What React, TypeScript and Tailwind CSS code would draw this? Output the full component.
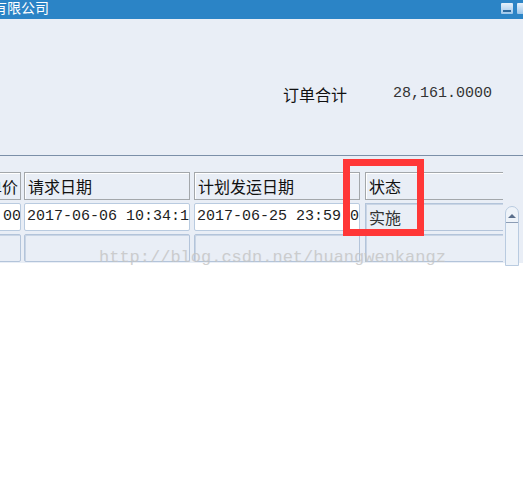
import React from "react";

const CJK = "font-['Noto_Sans_CJK_SC','Noto_Sans',sans-serif]";
const MONO = "font-['Liberation_Mono','Noto_Sans_CJK_SC',monospace]";

function HeaderCell({ label, className = "" }: { label: string; className?: string }) {
  return (
    <div
      className={`h-[28px] border border-[#a3a7ab] shadow-[inset_1px_1px_0_#ffffff] bg-[#e9eef6] overflow-hidden whitespace-nowrap pl-[3px] text-[16px] leading-[26px] text-[#111] ${CJK} ${className}`}
    >
      {label}
    </div>
  );
}

function InputCell({
  value,
  className = "",
  align = "left",
}: {
  value: string;
  className?: string;
  align?: "left" | "right";
}) {
  return (
    <div
      className={`h-[28px] border border-[#b9cbe0] rounded-[2px] bg-white overflow-hidden whitespace-nowrap px-[2px] text-[15px] leading-[26px] text-[#222] ${MONO} ${
        align === "right" ? "text-right" : "text-left"
      } ${className}`}
    >
      {value}
    </div>
  );
}

function ReadCell({ value = "", className = "" }: { value?: string; className?: string }) {
  return (
    <div
      className={`h-[28px] border border-[#b3c4da] rounded-[2px] bg-[#e9eef6] shadow-[inset_1px_1px_0_#c9d5e5] overflow-hidden whitespace-nowrap pl-[3px] text-[16px] leading-[26px] text-[#333] ${CJK} ${className}`}
    >
      {value}
    </div>
  );
}

export default function App() {
  return (
    <div className="relative w-[523px] h-[500px] bg-white overflow-hidden">
      {/* title bar */}
      <div className="h-[19px] bg-[#2b84c6] flex items-start justify-between">
        <span
          className={`ml-[-7px] mt-[-1px] text-[14px] leading-[16px] tracking-[0px] text-white ${CJK}`}
        >
          有限公司
        </span>
        <div className="flex gap-[4px] mt-[3px] mr-[-6px]">
          <div className="w-[12px] h-[11px] rounded-[1px] bg-gradient-to-b from-[#e6f1fb] to-[#9cc6ea] flex items-end justify-center pb-[2px]">
            <div className="w-[8px] h-[2px] bg-[#2e6a9e]" />
          </div>
          <div className="w-[12px] h-[11px] rounded-[1px] bg-gradient-to-b from-[#e6f1fb] to-[#9cc6ea]" />
        </div>
      </div>

      {/* summary panel */}
      <div className="h-[137px] bg-[#e9eef6] border-b border-[#7b8fa8] flex items-start pt-[65px]">
        <span className={`ml-[283px] text-[16px] leading-[20px] text-[#111] ${CJK}`}>订单合计</span>
        <span className={`ml-[46px] mt-[1px] text-[15px] leading-[18px] text-[#333] ${MONO}`}>
          28,161.0000
        </span>
      </div>

      {/* table panel */}
      <div className="h-[107px] bg-[#e9eef6] pt-[16px] flex">
        <div className="ml-[-18px] flex flex-col gap-[3px]">
          <div className="flex">
            <HeaderCell label="单价" className="w-[39px]" />
            <HeaderCell label="请求日期" className="w-[166px] ml-[3px]" />
            <HeaderCell label="计划发运日期" className="w-[166px] ml-[4px]" />
            <HeaderCell label="状态" className="w-[138px] ml-[5px] border-r-0" />
          </div>
          <div className="flex">
            <InputCell value="0.00" align="right" className="w-[39px]" />
            <InputCell value="2017-06-06 10:34:12" className="w-[166px] ml-[3px]" />
            <InputCell value="2017-06-25 23:59:00" className="w-[166px] ml-[4px]" />
            <ReadCell value="实施" className="w-[138px] ml-[5px] border-r-0 rounded-none" />
          </div>
          <div className="flex">
            <ReadCell className="w-[39px]" />
            <ReadCell className="w-[166px] ml-[3px]" />
            <ReadCell className="w-[166px] ml-[4px]" />
            <ReadCell className="w-[138px] ml-[5px] border-r-0 rounded-none" />
          </div>
        </div>

        {/* scrollbar */}
        <div className="ml-[2px] pt-[34px]">
          <div className="w-[14px] h-[60px] border border-[#b9cbe0] rounded-t-[7px] bg-[#eef3f9] flex flex-col items-center">
            <svg width="10" height="12" viewBox="0 0 10 12" className="mt-[3px]">
              <path d="M1 8 L5 4 L9 8 Z" fill="#5b6f8c" />
            </svg>
            <div className="w-[12px] h-[1px] bg-[#8b9cb4]" />
          </div>
        </div>
      </div>

      {/* watermark */}
      <div
        className={`pointer-events-none absolute left-[99px] top-[248px] text-[17px] leading-[20px] text-[#c4c4c4] opacity-80 ${MONO}`}
      >
        http://blog.csdn.net/huangwenkangz
      </div>

      {/* annotation box */}
      <div className="pointer-events-none absolute left-[343px] top-[159px] w-[81px] h-[77px] border-[7px] border-[#ff3737]" />
    </div>
  );
}
